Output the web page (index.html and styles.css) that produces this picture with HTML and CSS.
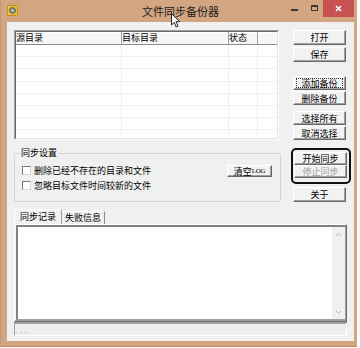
FILE: index.html
```html
<!DOCTYPE html>
<html lang="zh">
<head>
    <meta charset="UTF-8">
    <meta name="viewport" content="width=device-width, initial-scale=1.0">
    <title>文件同步备份器</title>
    <link rel="stylesheet" href="styles.css">
</head>
<body>
    <div class="Win">
        <div class="Win-titlebar">
            <div class="Win-iconWrap">
                <svg class="Win-icon" width="11" height="11" viewBox="0 0 11 11">
                    <rect x="0.5" y="0.5" width="10" height="10" rx="1" fill="#f2c23a" stroke="#c08a1c"/>
                    <circle cx="5.5" cy="5.5" r="3" fill="#8a8a8a" stroke="#555" stroke-width="0.8"/>
                    <circle cx="5.5" cy="5.5" r="1.1" fill="#e0e0e0"/>
                </svg>
            </div>
            <div class="Win-title">文件同步备份器</div>
            <div class="Win-caption">
                <span class="Win-cap Win-cap--min"><i></i></span>
                <span class="Win-cap Win-cap--max"><i></i></span>
                <span class="Win-cap Win-cap--close">
                    <svg width="7" height="7" viewBox="0 0 7 7"><path d="M1 1 L6 6 M6 1 L1 6" stroke="#fff" stroke-width="1.6"/></svg>
                </span>
            </div>
        </div>

        <div class="Win-client">
            <div class="Top">
                <div class="Top-left">
                    <div class="List">
                        <div class="List-inner">
                            <div class="List-head">
                                <span class="List-hcell c1">源目录</span>
                                <span class="List-hcell c2">目标目录</span>
                                <span class="List-hcell c3">状态</span>
                                <span class="List-hcell c4"></span>
                            </div>
                            <div class="List-row"><span class="c1"></span><span class="c2"></span><span class="c3"></span><span class="c4"></span></div>
                            <div class="List-row"><span class="c1"></span><span class="c2"></span><span class="c3"></span><span class="c4"></span></div>
                            <div class="List-row"><span class="c1"></span><span class="c2"></span><span class="c3"></span><span class="c4"></span></div>
                            <div class="List-row"><span class="c1"></span><span class="c2"></span><span class="c3"></span><span class="c4"></span></div>
                            <div class="List-row"><span class="c1"></span><span class="c2"></span><span class="c3"></span><span class="c4"></span></div>
                            <div class="List-row"><span class="c1"></span><span class="c2"></span><span class="c3"></span><span class="c4"></span></div>
                            <div class="List-row"><span class="c1"></span><span class="c2"></span><span class="c3"></span><span class="c4"></span></div>
                            <div class="List-row"><span class="c1"></span><span class="c2"></span><span class="c3"></span><span class="c4"></span></div>
                        </div>
                    </div>

                    <fieldset class="Group">
                        <legend>同步设置</legend>
                        <div class="Group-body">
                            <div class="Group-checks">
                                <label class="Check"><span class="Check-box"></span>删除已经不存在的目录和文件</label>
                                <label class="Check"><span class="Check-box"></span>忽略目标文件时间较新的文件</label>
                            </div>
                            <button class="Btn Btn--log">清空<small>LOG</small></button>
                        </div>
                    </fieldset>
                </div>

                <div class="Top-right">
                    <button class="Btn Btn--tall">打开</button>
                    <button class="Btn Btn--tall Btn--save">保存</button>
                    <button class="Btn Btn--add"><span class="Btn-focus">添加备份</span></button>
                    <button class="Btn Btn--next">删除备份</button>
                    <button class="Btn Btn--sel">选择所有</button>
                    <button class="Btn Btn--next">取消选择</button>
                    <div class="Ring">
                        <button class="Btn Btn--sync">开始同步</button>
                        <button class="Btn Btn--sync" disabled>停止同步</button>
                    </div>
                    <button class="Btn Btn--tall Btn--about">关于</button>
                </div>
            </div>

            <div class="Tabs">
                <span class="Tab Tab--active">同步记录</span>
                <span class="Tab">失败信息</span>
            </div>
            <div class="TabPanel">
                <div class="Memo">
                    <div class="Memo-text"></div>
                    <div class="Memo-scroll">
                        <svg width="7" height="5" viewBox="0 0 7 5"><path d="M1 4 L3.5 1.5 L6 4" fill="none" stroke="#b4b4b4" stroke-width="1"/></svg>
                        <svg width="7" height="5" viewBox="0 0 7 5"><path d="M1 1 L3.5 3.5 L6 1" fill="none" stroke="#b4b4b4" stroke-width="1"/></svg>
                    </div>
                </div>
            </div>
            <div class="Status"><span class="Status-dots">...</span></div>
        </div>

        <svg class="Cursor" width="10" height="15" viewBox="0 0 10 15">
            <path d="M0.5 0.5 L0.5 12 L3.2 9.4 L5.2 14 L7 13.2 L5 8.7 L8.6 8.7 Z" fill="#fff" stroke="#222" stroke-width="1"/>
        </svg>
    </div>
</body>
</html>
```

FILE: styles.css
```css
* {
    margin: 0;
    padding: 0;
    box-sizing: border-box;
}

body {
    background: #ffffff;
    font-family: "Noto Sans CJK SC", "Noto Sans", sans-serif;
    font-size: 9px;
    color: #000000;
}

/* window frame */

.Win {
    position: relative;
    width: 357px;
    height: 347px;
    background: #d3a581;
    box-shadow: inset 0 -1px #b88c6b, inset 1px 0 #c29676;
}

.Win-titlebar {
    height: 22px;
    display: grid;
    grid-template-columns: 1fr auto 1fr;
}

.Win-iconWrap {
    padding: 5px 0 0 7px;
}

.Win-icon {
    display: block;
}

.Win-title {
    font-size: 11px;
    line-height: 23px;
    color: #1c1c1c;
    padding-left: 4px;
}

.Win-caption {
    justify-self: end;
    display: flex;
    height: 17px;
    margin-right: 3px;
}

.Win-cap {
    display: flex;
    align-items: center;
    justify-content: center;
}

.Win-cap--min {
    width: 24px;
    padding-top: 3px;
}

.Win-cap--min i {
    width: 7px;
    height: 2px;
    background: #3a3a3a;
}

.Win-cap--max {
    width: 17px;
    padding-bottom: 2px;
}

.Win-cap--max i {
    width: 7px;
    height: 6px;
    border: 1px solid #3a3a3a;
    border-top-width: 2px;
}

.Win-cap--close {
    width: 31px;
    background: #c75252;
}

.Win-cap--close svg {
    display: block;
}

.Win-client {
    margin-left: 7px;
    width: 347px;
    height: 319px;
    background: #f0f0f0;
    padding: 8px 0 0 7px;
}

/* top area */

.Top {
    display: flex;
    gap: 12px;
}

.Top-left {
    width: 267px;
}

.Top-right {
    width: 53px;
    display: flex;
    flex-direction: column;
}

/* list view */

.List {
    width: 265px;
    height: 110px;
    border: 1px solid;
    border-color: #a0a0a0 #ffffff #ffffff #a0a0a0;
}

.List-inner {
    height: 100%;
    background: #ffffff;
    border: 1px solid;
    border-color: #696969 #e3e3e3 #e3e3e3 #696969;
    overflow: hidden;
}

.List-head {
    display: flex;
    height: 13px;
}

.List-hcell {
    background: #f7f7f7;
    border-right: 1px solid #a0a0a0;
    border-bottom: 1px solid #8c8c8c;
    box-shadow: inset 0 1px #ffffff;
    line-height: 12px;
    white-space: nowrap;
}

.List-hcell.c4 {
    border-right: none;
}

.c1 { width: 106px; }
.c2 { width: 107px; }
.c3 { width: 29px; }
.c4 { flex: 1; }

.List-row {
    display: flex;
    height: 12.2px;
    border-bottom: 1px solid #f0f0f0;
}

.List-row span {
    border-right: 1px solid #f0f0f0;
}

.List-row .c4 {
    border-right: none;
}

/* group box */

.Group {
    margin-top: 7px;
    height: 55px;
    border: 1px solid #d5d5d5;
    border-radius: 2px;
    padding: 0 8px 0 7px;
}

.Group legend {
    line-height: 12px;
    margin-left: -2px;
    padding: 0 1px;
}

.Group-body {
    display: flex;
    justify-content: space-between;
    align-items: flex-start;
    padding-top: 4px;
}

.Check {
    display: flex;
    align-items: center;
    gap: 3px;
    height: 15px;
}

.Check-box {
    width: 9px;
    height: 9px;
    background: #ffffff;
    border: 1px solid;
    border-color: #7a7a7a #d8d8d8 #d8d8d8 #7a7a7a;
}

/* buttons */

.Btn {
    display: flex;
    align-items: center;
    justify-content: center;
    width: 53px;
    height: 14px;
    font-family: inherit;
    font-size: 9px;
    color: #000000;
    background: #f2f2f2;
    border: 1px solid;
    border-color: #ffffff #696969 #696969 #ffffff;
    box-shadow: inset -1px -1px #a0a0a0;
}

.Btn:disabled {
    color: #a3a3a3;
}

.Btn--tall {
    height: 15px;
}

.Btn--save {
    margin-top: 2px;
}

.Btn--add {
    margin-top: 14px;
}

.Btn--next {
    margin-top: 1px;
}

.Btn--sel {
    margin-top: 6px;
}

.Btn--about {
    margin-top: 3px;
}

.Btn-focus {
    display: flex;
    align-items: center;
    justify-content: center;
    width: 47px;
    height: 10px;
    border: 1px dotted #333333;
}

.Btn--log {
    width: 45px;
    height: 12px;
    margin-top: 2px;
}

.Btn--log small {
    font-family: "Liberation Serif", serif;
    font-size: 7px;
    letter-spacing: -0.3px;
}

.Ring {
    margin: 8px -5px 0 -2px;
    height: 36px;
    border: 2px solid #111111;
    border-radius: 5px;
    padding: 2px 2px 0 1px;
}

.Btn--sync {
    height: 13px;
}

/* tabs */

.Tabs {
    display: flex;
    align-items: flex-end;
    height: 15px;
    margin-top: 7px;
}

.Tab {
    height: 13px;
    line-height: 12px;
    padding: 0 3px;
    border-top: 1px solid #ffffff;
    border-right: 1px solid #8a8a8a;
}

.Tab--active {
    height: 15px;
    line-height: 14px;
    padding: 0 5px;
    border-left: 1px solid #ffffff;
    border-right-color: #a0a0a0;
}

.TabPanel {
    width: 333px;
    height: 98px;
    display: flex;
    padding: 0 0 1px 1px;
    border: 1px solid;
    border-color: #ffffff #696969 #696969 #ffffff;
    box-shadow: inset -1px -1px #a0a0a0;
}

.Memo {
    flex: 1;
    display: flex;
    background: #ffffff;
    border-style: solid;
    border-width: 2px 1px 1px 2px;
    border-color: #828282 #a0a0a0 #a0a0a0 #828282;
}

.Memo-text {
    flex: 1;
}

.Memo-scroll {
    width: 13px;
    background: #f0f0f0;
    display: flex;
    flex-direction: column;
    justify-content: space-between;
    align-items: center;
    padding: 5px 0 4px;
}

.Memo-scroll svg {
    display: block;
}

/* status bar */

.Status {
    width: 333px;
    height: 14px;
    border-top: 2px solid #a0a0a0;
    border-left: 1px solid #a0a0a0;
    border-right: 1px solid #ffffff;
    border-bottom: 1px solid #ffffff;
    background: #eeeeee;
    padding: 5px 0 0 1px;
}

.Status-dots {
    display: block;
    font-family: "DejaVu Sans", sans-serif;
    font-size: 7px;
    line-height: 5px;
    letter-spacing: 2px;
    color: #8a8a8a;
}

/* mouse pointer captured in the shot */

.Cursor {
    position: absolute;
    left: 171px;
    top: 13px;
}
```
